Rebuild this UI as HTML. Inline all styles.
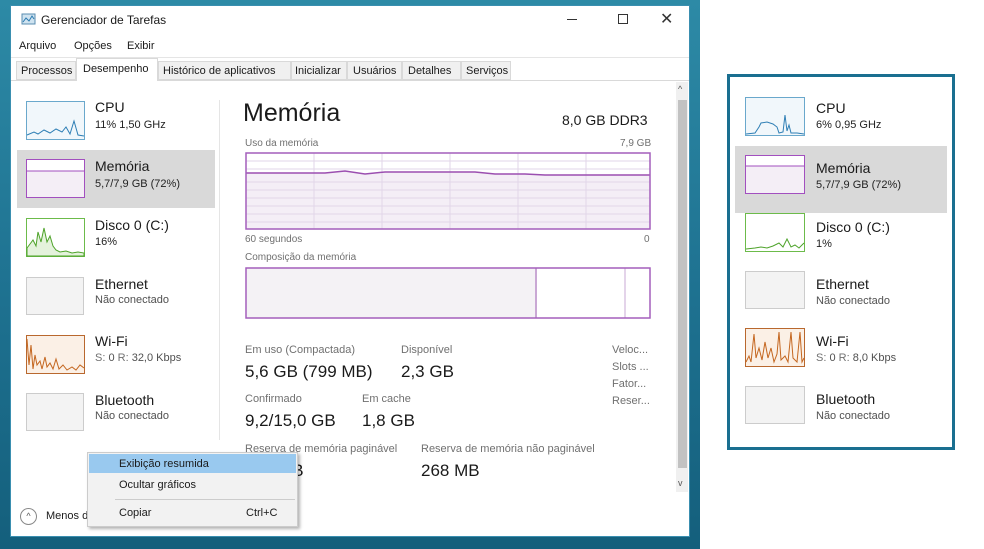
<!DOCTYPE html>
<html><head><meta charset="utf-8"><style>
*{margin:0;padding:0;box-sizing:border-box}
body{width:984px;height:549px;overflow:hidden;background:#fff;font-family:"Liberation Sans",sans-serif;color:#1a1a1a;position:relative}
.a{position:absolute;white-space:nowrap}
.s{font-size:11px}
.g{color:#707070}
.thumb{position:absolute;width:58px;height:38px;border:1px solid #ccc;background:#f3f3f3}
.t{font-size:14px}
.sub{font-size:11px;color:#505050}
.lbl{font-size:11px;color:#707070}
.val{font-size:17px}
</style></head><body>
<div class="a" style="left:0;top:0;width:700px;height:549px;background:linear-gradient(180deg,#2d8aa6 0%,#1f7392 50%,#145f7c 100%)"></div>
<div class="a" style="left:10px;top:5px;width:680px;height:532px;background:#fff;border:1px solid #3a8fb0"></div>
<!-- title -->
<svg class="a" style="left:21px;top:13px" width="16" height="14"><rect x="1" y="1" width="13" height="10" fill="#cfe3f0" stroke="#5a8db0"/><polyline points="2,9 5,5 8,8 11,3 13,6" fill="none" stroke="#2a7ab0"/></svg>
<div class="a s" style="left:41px;top:13px;font-size:12px">Gerenciador de Tarefas</div>
<div class="a" style="left:567px;top:19px;width:10px;height:1px;background:#333"></div>
<div class="a" style="left:618px;top:14px;width:10px;height:10px;border:1px solid #333"></div>
<div class="a" style="left:660px;top:9px;font-size:16px;color:#333">✕</div>
<div class="a s" style="left:19px;top:40px">Arquivo</div>
<div class="a s" style="left:74px;top:40px">Opções</div>
<div class="a s" style="left:127px;top:40px">Exibir</div>
<div class="a" style="left:11px;top:57px;width:678px;height:1px;background:#e5e5e5"></div>
<!-- tabs -->
<div class="a" style="left:11px;top:80px;width:678px;height:1px;background:#d9d9d9"></div>
<div class="a s" style="left:16px;top:61px;width:60px;height:19px;background:#f0f0f0;border:1px solid #d9d9d9;padding:3px 4px">Processos</div>
<div class="a s" style="left:76px;top:58px;width:82px;height:23px;background:#fff;border:1px solid #d9d9d9;border-bottom:none;padding:4px 6px">Desempenho</div>
<div class="a s" style="left:158px;top:61px;width:133px;height:19px;background:#f0f0f0;border:1px solid #d9d9d9;padding:3px 4px">Histórico de aplicativos</div>
<div class="a s" style="left:291px;top:61px;width:56px;height:19px;background:#f0f0f0;border:1px solid #d9d9d9;padding:3px 3px">Inicializar</div>
<div class="a s" style="left:347px;top:61px;width:55px;height:19px;background:#f0f0f0;border:1px solid #d9d9d9;padding:3px 5px">Usuários</div>
<div class="a s" style="left:402px;top:61px;width:59px;height:19px;background:#f0f0f0;border:1px solid #d9d9d9;padding:3px 5px">Detalhes</div>
<div class="a s" style="left:461px;top:61px;width:50px;height:19px;background:#f0f0f0;border:1px solid #d9d9d9;padding:3px 4px">Serviços</div>
<!-- left pane -->
<div class="a" style="left:17px;top:150px;width:198px;height:58px;background:#d9d9d9"></div>
<div class="a" style="left:219px;top:100px;width:1px;height:340px;background:#e5e5e5"></div>
<svg class="a" style="left:26px;top:101px" width="59" height="39"><rect x=".5" y=".5" width="58" height="38" fill="#f1f7fb" stroke="#6aa8cc"/><polyline points="1,34 8,31 12,33 18,29 24,32 30,28 36,31 40,26 44,33 48,20 52,34 58,35" fill="none" stroke="#2f7fb5"/></svg>
<div class="a t" style="left:95px;top:99px">CPU</div><div class="a sub" style="left:95px;top:119px;color:#222">11% 1,50 GHz</div>
<svg class="a" style="left:26px;top:159px" width="59" height="39"><rect x=".5" y=".5" width="58" height="38" fill="#f4eef6" stroke="#a24fbf"/><rect x="1" y="1" width="57" height="11" fill="#fff"/><line x1="1" y1="12" x2="58" y2="12" stroke="#a24fbf"/></svg>
<div class="a t" style="left:95px;top:158px">Memória</div><div class="a sub" style="left:95px;top:178px;color:#222">5,7/7,9 GB (72%)</div>
<svg class="a" style="left:26px;top:218px" width="59" height="39"><rect x=".5" y=".5" width="58" height="38" fill="#fff" stroke="#6cbb4a"/><polygon points="1,38 1,30 4,26 7,22 10,28 12,14 15,24 18,10 21,24 24,18 27,28 30,32 34,34 40,33 46,35 52,34 58,35 58,38" fill="#e4f2dc" stroke="#4ea32a"/></svg>
<div class="a t" style="left:95px;top:217px">Disco 0 (C:)</div><div class="a sub" style="left:95px;top:236px;color:#222">16%</div>
<div class="thumb" style="left:26px;top:277px"></div>
<div class="a t" style="left:95px;top:276px">Ethernet</div><div class="a sub g" style="left:95px;top:294px">Não conectado</div>
<svg class="a" style="left:26px;top:335px" width="59" height="39"><rect x=".5" y=".5" width="58" height="38" fill="#fbf0e6" stroke="#b9682e"/><polyline points="1,4 3,30 5,10 7,34 9,20 11,30 14,26 16,34 19,22 21,32 24,28 27,34 30,24 33,34 37,30 41,35 46,32 50,35 54,30 58,33" fill="none" stroke="#c4661f"/></svg>
<div class="a t" style="left:95px;top:333px">Wi-Fi</div><div class="a sub" style="left:95px;top:352px"><span class="g">S:</span> 0 <span class="g">R:</span> 32,0 Kbps</div>
<div class="thumb" style="left:26px;top:393px"></div>
<div class="a t" style="left:95px;top:392px">Bluetooth</div><div class="a sub g" style="left:95px;top:410px">Não conectado</div>
<!-- main -->
<div class="a" style="left:243px;top:99px;font-size:25px">Memória</div>
<div class="a" style="left:562px;top:112px;font-size:14px">8,0 GB DDR3</div>
<div class="a lbl" style="left:245px;top:138px;font-size:10px">Uso da memória</div>
<div class="a lbl" style="left:620px;top:138px;font-size:10px">7,9 GB</div>
<svg class="a" style="left:245px;top:152px" width="406" height="78"><rect x="1" y="1" width="404" height="76" fill="#fff"/><polygon points="1,21 80,21 100,19 120,22 140,20 230,20 250,22 280,22 300,23 405,23 405,77 1,77" fill="#f4eef6"/><g stroke="#e2d6e8" stroke-width="1"><line x1="1" y1="9" x2="405" y2="9"/><line x1="1" y1="17" x2="405" y2="17"/><line x1="1" y1="30" x2="405" y2="30"/><line x1="1" y1="38" x2="405" y2="38"/><line x1="1" y1="46" x2="405" y2="46"/><line x1="1" y1="54" x2="405" y2="54"/><line x1="1" y1="62" x2="405" y2="62"/><line x1="1" y1="70" x2="405" y2="70"/><line x1="69" y1="1" x2="69" y2="77"/><line x1="137" y1="1" x2="137" y2="77"/><line x1="205" y1="1" x2="205" y2="77"/><line x1="273" y1="1" x2="273" y2="77"/><line x1="341" y1="1" x2="341" y2="77"/></g><polyline points="1,21 80,21 100,19 120,22 140,20 230,20 250,22 280,22 300,23 405,23" fill="none" stroke="#9b4fb0" stroke-width="1.5"/><rect x="1" y="1" width="404" height="76" fill="none" stroke="#a45fbc" stroke-width="1.5"/></svg>
<div class="a lbl" style="left:245px;top:234px;font-size:10px">60 segundos</div>
<div class="a lbl" style="left:644px;top:234px;font-size:10px">0</div>
<div class="a lbl" style="left:245px;top:252px;font-size:10px">Composição da memória</div>
<svg class="a" style="left:245px;top:267px" width="406" height="52"><rect x="1" y="1" width="290" height="50" fill="#f4f2f5"/><line x1="291" y1="1" x2="291" y2="51" stroke="#c9a8d4" stroke-width="2"/><line x1="380" y1="1" x2="380" y2="51" stroke="#c9a8d4"/><rect x="1" y="1" width="404" height="50" fill="none" stroke="#a45fbc" stroke-width="1.5"/></svg>
<div class="a lbl" style="left:245px;top:344px">Em uso (Compactada)</div>
<div class="a val" style="left:245px;top:362px">5,6 GB (799 MB)</div>
<div class="a lbl" style="left:401px;top:344px">Disponível</div>
<div class="a val" style="left:401px;top:362px">2,3 GB</div>
<div class="a lbl" style="left:245px;top:393px">Confirmado</div>
<div class="a val" style="left:245px;top:411px">9,2/15,0 GB</div>
<div class="a lbl" style="left:362px;top:393px">Em cache</div>
<div class="a val" style="left:362px;top:411px">1,8 GB</div>
<div class="a lbl" style="left:245px;top:443px">Reserva de memória paginável</div>
<div class="a val" style="left:245px;top:461px">292 MB</div>
<div class="a lbl" style="left:421px;top:443px">Reserva de memória não paginável</div>
<div class="a val" style="left:421px;top:461px">268 MB</div>
<div class="a lbl" style="left:612px;top:344px">Veloc...</div>
<div class="a lbl" style="left:612px;top:361px">Slots ...</div>
<div class="a lbl" style="left:612px;top:378px">Fator...</div>
<div class="a lbl" style="left:612px;top:395px">Reser...</div>
<!-- scrollbar -->
<div class="a" style="left:676px;top:82px;width:12px;height:410px;background:#f0f0f0"></div>
<div class="a" style="left:678px;top:100px;width:9px;height:368px;background:#c2c2c2"></div>
<div class="a" style="left:678px;top:84px;font-size:9px;color:#555">^</div>
<div class="a" style="left:678px;top:478px;font-size:9px;color:#555">v</div>
<!-- bottom -->
<div class="a" style="left:20px;top:508px;width:17px;height:17px;border:1px solid #888;border-radius:50%;font-size:9px;text-align:center;line-height:14px;color:#555">^</div>
<div class="a s" style="left:46px;top:510px">Menos detalhes</div>
<!-- context menu -->
<div class="a" style="left:87px;top:452px;width:211px;height:75px;background:#f2f2f2;border:1px solid #ccc;box-shadow:2px 2px 3px rgba(0,0,0,.3)"></div>
<div class="a" style="left:89px;top:454px;width:207px;height:19px;background:#99c9ef"></div>
<div class="a s" style="left:119px;top:458px">Exibição resumida</div>
<div class="a s" style="left:119px;top:479px">Ocultar gráficos</div>
<div class="a" style="left:115px;top:499px;width:180px;height:1px;background:#ccc"></div>
<div class="a s" style="left:119px;top:507px">Copiar</div>
<div class="a s" style="left:246px;top:507px">Ctrl+C</div>
<!-- compact window -->
<div class="a" style="left:727px;top:74px;width:228px;height:376px;border:3px solid #1a6f90;background:#fff"></div>
<div class="a" style="left:735px;top:146px;width:212px;height:67px;background:#d9d9d9"></div>
<svg class="a" style="left:745px;top:97px" width="60" height="39"><rect x=".5" y=".5" width="59" height="38" fill="#f1f7fb" stroke="#6aa8cc"/><polyline points="1,37 10,36 14,30 16,26 22,25 28,27 32,30 34,36 38,35 40,18 42,34 44,28 46,36 52,36 59,37" fill="none" stroke="#2f7fb5"/></svg>
<div class="a t" style="left:816px;top:100px">CPU</div><div class="a sub" style="left:816px;top:119px;color:#222">6% 0,95 GHz</div>
<svg class="a" style="left:745px;top:155px" width="60" height="39"><rect x=".5" y=".5" width="59" height="38" fill="#f4eef6" stroke="#a24fbf"/><rect x="1" y="1" width="58" height="10" fill="#fff"/><line x1="1" y1="11" x2="59" y2="11" stroke="#a24fbf"/></svg>
<div class="a t" style="left:816px;top:160px">Memória</div><div class="a sub" style="left:816px;top:179px;color:#222">5,7/7,9 GB (72%)</div>
<svg class="a" style="left:745px;top:213px" width="60" height="39"><rect x=".5" y=".5" width="59" height="38" fill="#fff" stroke="#6cbb4a"/><polyline points="1,36 10,35 16,34 22,35 28,33 34,30 38,34 42,26 46,34 50,32 54,35 59,30" fill="none" stroke="#4ea32a"/></svg>
<div class="a t" style="left:816px;top:219px">Disco 0 (C:)</div><div class="a sub" style="left:816px;top:238px;color:#222">1%</div>
<div class="thumb" style="left:745px;top:271px;width:60px"></div>
<div class="a t" style="left:816px;top:276px">Ethernet</div><div class="a sub g" style="left:816px;top:295px">Não conectado</div>
<svg class="a" style="left:745px;top:328px" width="60" height="39"><rect x=".5" y=".5" width="59" height="38" fill="#fbf0e6" stroke="#b9682e"/><polyline points="1,34 4,28 6,34 9,6 11,30 14,20 17,32 20,14 23,30 26,20 29,34 32,26 34,4 36,32 40,28 43,34 46,4 48,30 52,34 55,4 57,34 59,30" fill="none" stroke="#c4661f"/></svg>
<div class="a t" style="left:816px;top:333px">Wi-Fi</div><div class="a sub" style="left:816px;top:352px"><span class="g">S:</span> 0 <span class="g">R:</span> 8,0 Kbps</div>
<div class="thumb" style="left:745px;top:386px;width:60px"></div>
<div class="a t" style="left:816px;top:391px">Bluetooth</div><div class="a sub g" style="left:816px;top:410px">Não conectado</div>
</body></html>
